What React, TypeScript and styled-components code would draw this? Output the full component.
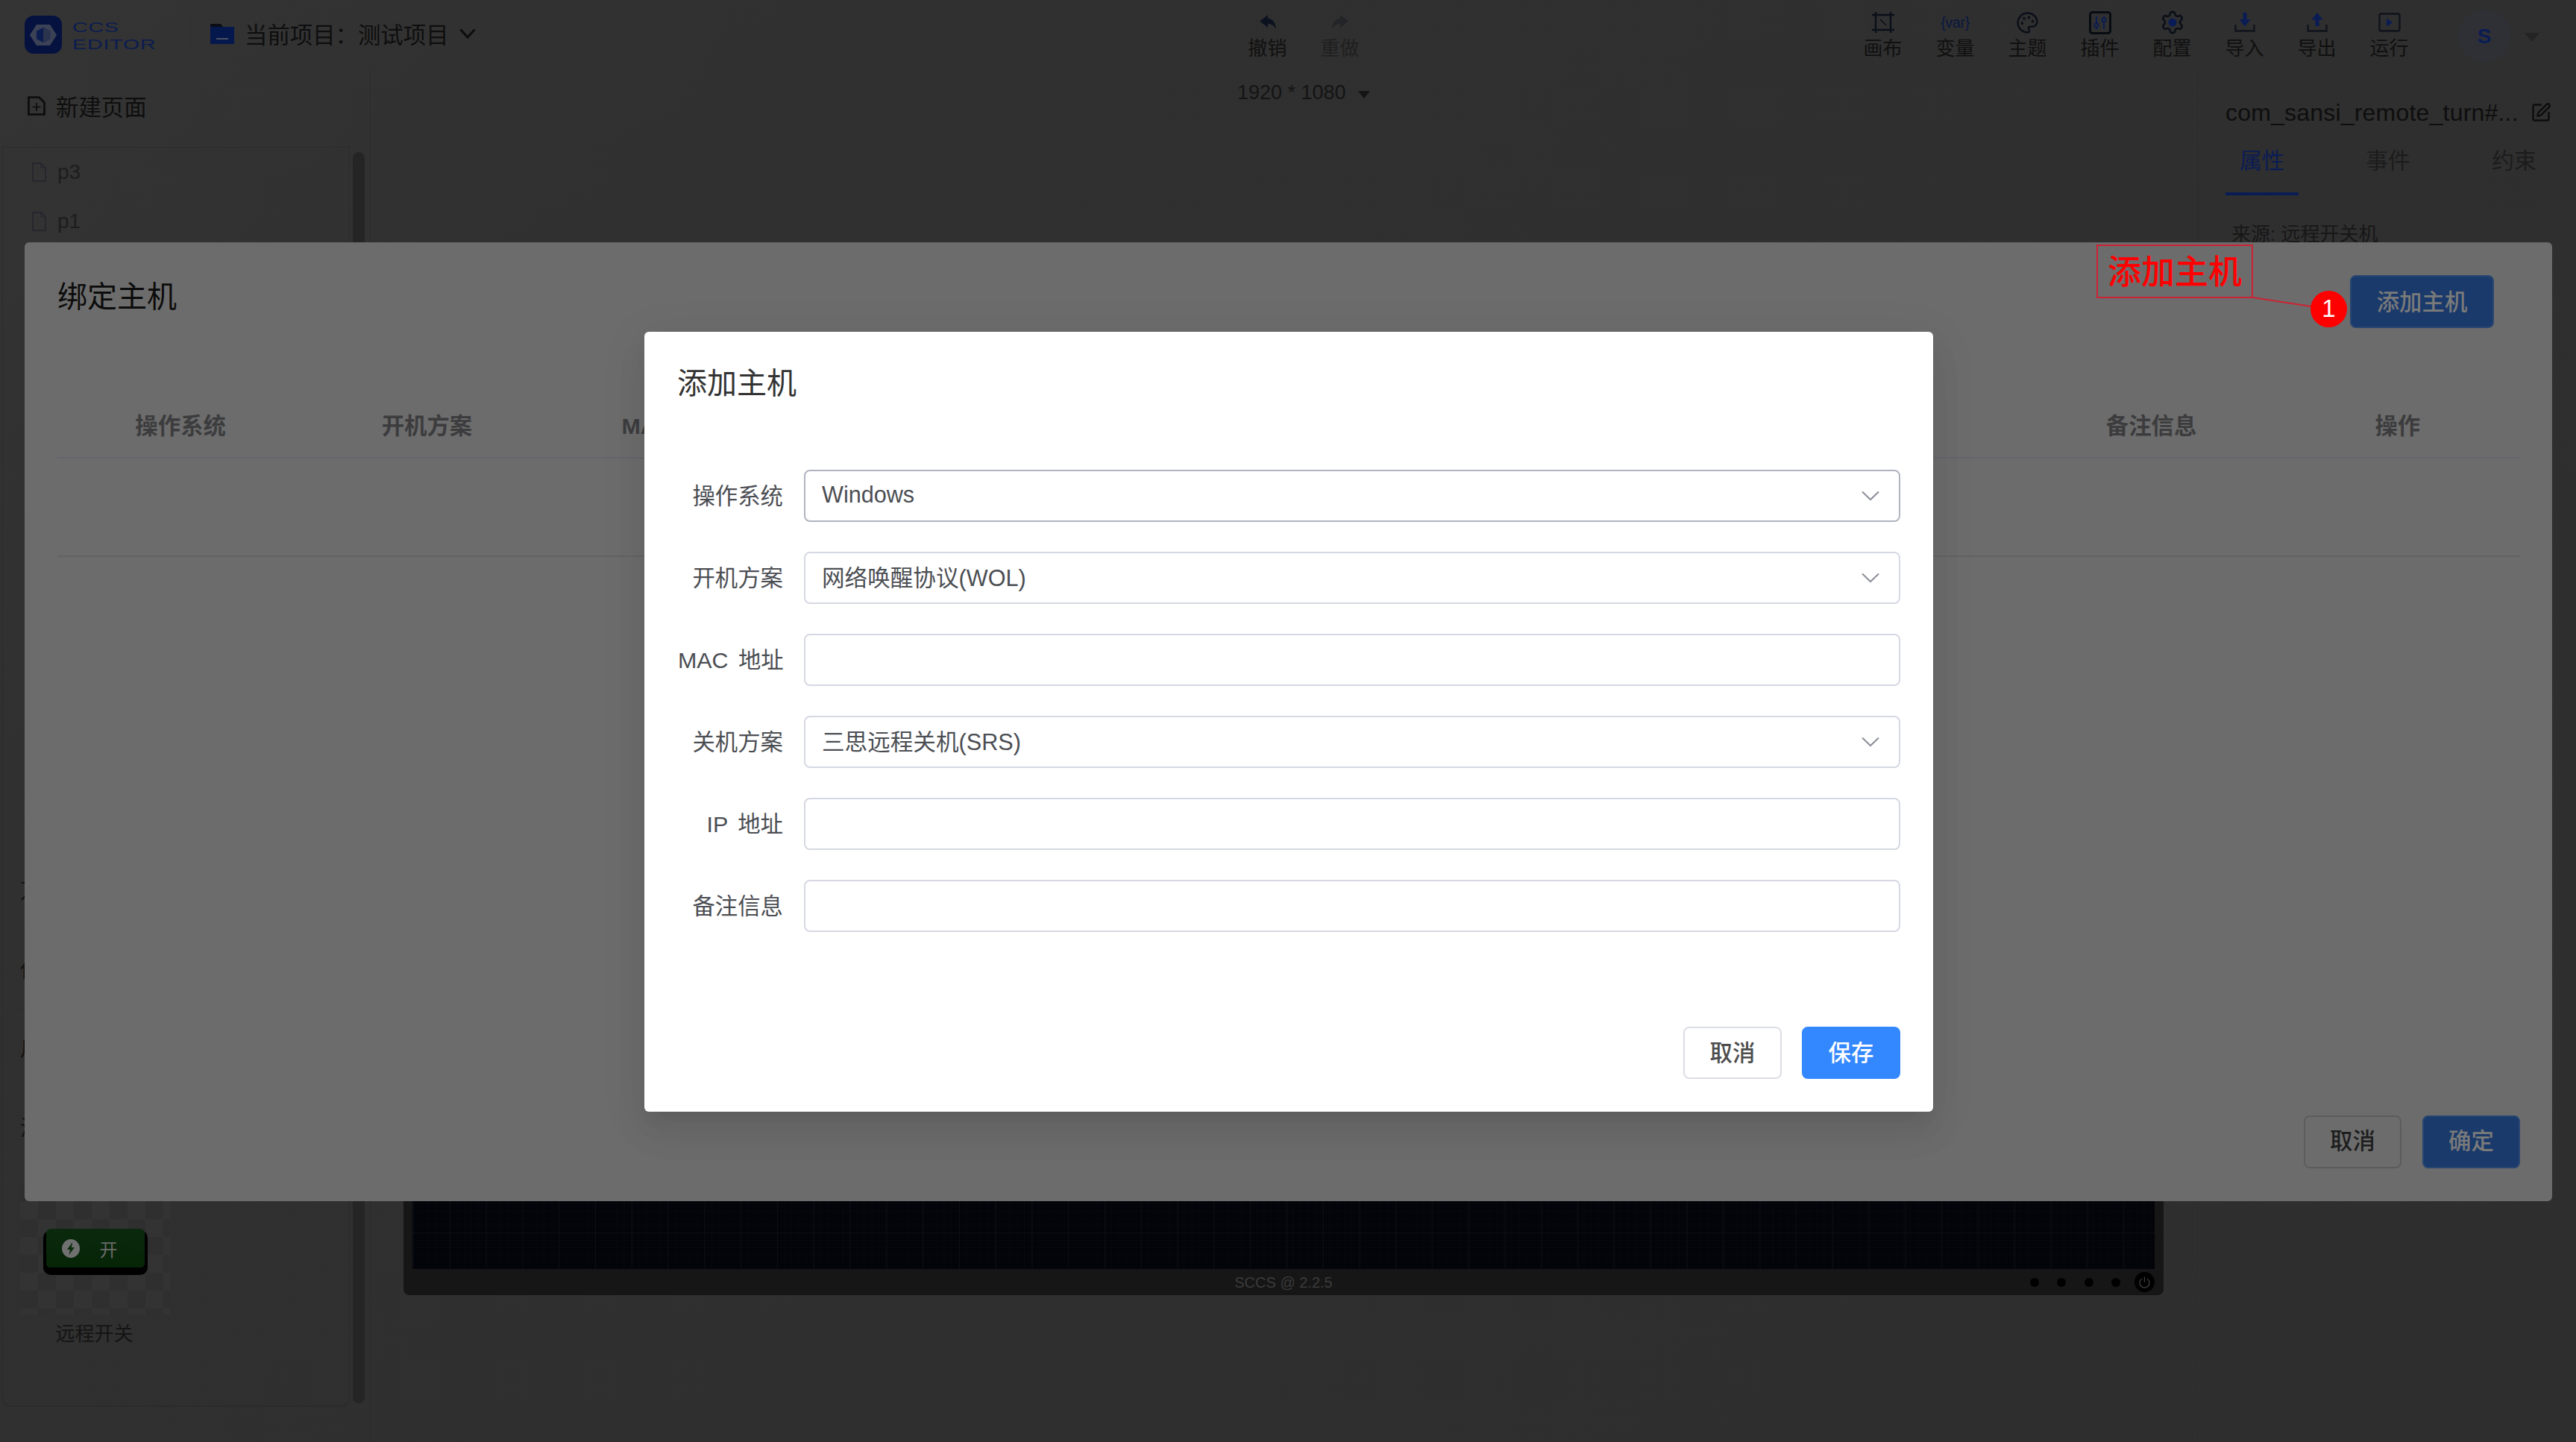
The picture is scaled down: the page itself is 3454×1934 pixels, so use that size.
import React from "react";
import styled, { createGlobalStyle } from "styled-components";
import { Palette, Settings, SquarePen } from "lucide-react";

const Global = createGlobalStyle`
  html, body { margin: 0; padding: 0; }
  * { box-sizing: border-box; }
  body { font-family: "Liberation Sans", "Noto Sans CJK SC", sans-serif; }
`;

const Root = styled.div`
  position: relative;
  width: 3454px;
  height: 1934px;
  overflow: hidden;
  display: flex;
  flex-direction: column;
  background: linear-gradient(135deg, #343434 0, #303030 20%, #2e2e2e 100%);
  color: #111;
`;

/* ---------- top bar ---------- */
const TopBar = styled.header`
  height: 92px;
  flex: none;
  display: flex;
  align-items: flex-start;
`;
const LeftGroup = styled.div`
  width: 1651px;
  height: 92px;
  flex: none;
  display: flex;
  align-items: flex-start;
  padding: 21px 0 0 33px;
`;
const LogoMark = styled.div`
  width: 50px;
  height: 51px;
  border-radius: 12px;
  background: #05123f;
  display: flex;
  align-items: center;
  justify-content: center;
`;
const LogoWords = styled.div`
  width: 157px;
  margin-left: 14px;
  padding-top: 8px;
  display: flex;
  flex-direction: column;
  gap: 8px;
`;
const LogoWord = styled.span`
  display: block;
  font-size: 19px;
  line-height: 15px;
  letter-spacing: 0.6px;
  color: #0b1c4f;
  transform: scaleX(1.5);
  transform-origin: left center;
`;
const LogoDivider = styled.div`
  width: 1px;
  height: 46px;
  margin-top: 2px;
  background: #303030;
`;
const ProjectPicker = styled.div`
  display: flex;
  align-items: center;
  margin-left: 27px;
  height: 42px;
  margin-top: 3px;
  font-size: 30.4px;
  color: #0e0e0e;
`;
const ProjectName = styled.span`
  margin: 0 14px 0 14px;
  white-space: nowrap;
`;
const ToolGroup = styled.div`
  display: flex;
`;
const RightGroup = styled.div`
  margin-left: auto;
  display: flex;
  align-items: flex-start;
  padding-right: 49px;
`;
const ToolItem = styled.div<{ $muted?: boolean }>`
  width: 97px;
  height: 80px;
  display: flex;
  flex-direction: column;
  align-items: center;
  padding-top: 14px;
  font-size: 26px;
  line-height: 26px;
  color: ${(p) => (p.$muted ? "#1f1f1f" : "#101010")};
`;
const ToolGlyph = styled.div`
  height: 32px;
  margin-bottom: 6px;
  display: flex;
  align-items: center;
  justify-content: center;
`;
const VarGlyph = styled.span`
  font-size: 20px;
  line-height: 32px;
  letter-spacing: -0.5px;
  color: #0a1840;
  white-space: nowrap;
`;
const GearGlyph = styled(Settings)`
  circle {
    fill: #0a1c55;
    stroke: #0a1c55;
  }
`;
const Avatar = styled.div`
  width: 70px;
  height: 70px;
  margin: 13px 0 0 44px;
  border-radius: 50%;
  background: #2f3036;
  color: #0a1c55;
  font-size: 28px;
  font-weight: 700;
  display: flex;
  align-items: center;
  justify-content: center;
  padding-top: 2px;
`;
const AvatarCaret = styled.span`
  width: 0;
  height: 0;
  margin: 44px 0 0 19px;
  border-left: 10px solid transparent;
  border-right: 10px solid transparent;
  border-top: 12px solid #242424;
`;

/* ---------- body ---------- */
const Body = styled.div`
  flex: 1;
  min-height: 0;
  display: flex;
`;
const Sidebar = styled.aside`
  width: 497px;
  flex: none;
  display: flex;
  flex-direction: column;
  border-right: 1px solid #2b2b2b;
  padding-bottom: 47px;
`;
const NewPage = styled.div`
  height: 105px;
  flex: none;
  display: flex;
  align-items: center;
  gap: 14px;
  padding: 0 0 6px 37px;
  font-size: 30.4px;
  color: #0e0e0e;
`;
const SidePanel = styled.div`
  flex: 1;
  min-height: 0;
  display: flex;
`;
const PageList = styled.div`
  width: 466px;
  margin-left: 3px;
  flex: none;
  display: flex;
  flex-direction: column;
  border: 1px solid #2b2b2b;
  border-bottom-width: 2px;
  border-radius: 0 0 12px 12px;
`;
const PageRow = styled.div`
  height: 66px;
  flex: none;
  display: flex;
  align-items: center;
  gap: 15px;
  padding-left: 39px;
  font-size: 28px;
  color: #1d1d1d;
`;
const HiddenRows = styled.div`
  margin-top: 811px;
  flex: none;
`;
const HiddenRow = styled.div`
  height: 106px;
  margin-left: 23px;
  border-top: 1px solid #2b2b2b;
  display: flex;
  align-items: center;
  padding-bottom: 3px;
  font-size: 28px;
  color: #111;
`;
const PreviewBox = styled.div`
  width: 201px;
  height: 176px;
  margin: 22px 0 0 23px;
  flex: none;
  display: flex;
  align-items: center;
  justify-content: center;
  background: repeating-conic-gradient(#333333 0 25%, #2f2f2f 0 50%) 0 0 / 48px 48px;
`;
const SwitchButton = styled.div`
  width: 132px;
  height: 52px;
  margin-top: -2px;
  border-radius: 6px;
  background: linear-gradient(#0b290d, #062406);
  box-shadow: 0 6px 0 4px #000;
  display: flex;
  align-items: center;
  padding-left: 21px;
  gap: 27px;
  font-size: 24px;
  color: #6a6a6a;
`;
const PreviewLabel = styled.div`
  width: 201px;
  margin: 13px 0 0 22px;
  text-align: center;
  font-size: 26px;
  line-height: 26px;
  color: #141414;
`;
const ScrollThumb = styled.div`
  width: 16px;
  margin: 7px 0 5px 4px;
  border-radius: 8px;
  background: #252525;
`;

const Stage = styled.main`
  flex: 1;
  min-width: 0;
  display: flex;
  flex-direction: column;
  padding: 0 45px 197px 44px;
`;
const SizeRow = styled.div`
  display: flex;
  align-items: center;
  margin: 18px 0 0 1118px;
  height: 28px;
  font-size: 27px;
  color: #141414;
`;
const SizeCaret = styled.span`
  width: 0;
  height: 0;
  margin: 6px 0 0 16px;
  border-left: 8px solid transparent;
  border-right: 8px solid transparent;
  border-top: 10px solid #141414;
`;
const DeviceFrame = styled.div`
  margin-top: auto;
  height: 1237px;
  display: flex;
  flex-direction: column;
  padding: 0 12px;
  background: #161616;
  border-radius: 0 0 8px 8px;
`;
const GridCanvas = styled.div`
  flex: 1;
  background-color: #03040a;
  background-image:
    linear-gradient(#0d0e14 1px, transparent 1px),
    linear-gradient(90deg, #0d0e14 1px, transparent 1px),
    linear-gradient(#06070d 1px, transparent 1px),
    linear-gradient(90deg, #06070d 1px, transparent 1px);
  background-size: 48.8px 48.8px, 48.8px 48.8px, 9.76px 9.76px, 9.76px 9.76px;
  background-position: 1px 100%, 1px 100%, 1px 100%, 1px 100%;
`;
const DeviceFoot = styled.div`
  height: 35px;
  flex: none;
  display: grid;
  grid-template-columns: 1fr auto 1fr;
  align-items: center;
`;
const Version = styled.span`
  grid-column: 2;
  font-size: 20px;
  line-height: 20px;
  color: #3b3b3b;
`;
const DeviceControls = styled.div`
  grid-column: 3;
  justify-self: end;
  display: flex;
  align-items: center;
  gap: 24.6px;
`;
const DeviceDot = styled.span`
  width: 12px;
  height: 12px;
  border-radius: 50%;
  background: #000;
`;
const PowerDot = styled.span`
  width: 27px;
  height: 27px;
  margin-left: -6px;
  border-radius: 50%;
  background: #000;
  display: flex;
  align-items: center;
  justify-content: center;
`;

const Inspector = styled.aside`
  width: 508px;
  flex: none;
  border-left: 1px solid #2b2b2b;
  padding-left: 37px;
`;
const InspectorTitle = styled.div`
  display: flex;
  align-items: center;
  margin-top: 42px;
  height: 34px;
  font-size: 32px;
  letter-spacing: 0.2px;
  color: #0e0e0e;
`;
const TitleText = styled.span`
  width: 409px;
  flex: none;
  white-space: nowrap;
`;
const TabRow = styled.div`
  display: flex;
  gap: 71px;
  margin-top: 17px;
`;
const Tab = styled.div<{ $active?: boolean }>`
  width: 98px;
  height: 77px;
  padding-top: 16px;
  text-align: center;
  font-size: 30px;
  line-height: 30px;
  color: ${(p) => (p.$active ? "#0a1c55" : "#1c1c1c")};
  border-bottom: 4px solid ${(p) => (p.$active ? "#0a1c55" : "transparent")};
`;
const SourceText = styled.div`
  margin: 39px 0 0 8px;
  font-size: 26px;
  line-height: 26px;
  color: #171717;
`;

/* ---------- bind-host dialog ---------- */
const BindDialog = styled.section`
  position: absolute;
  left: 33px;
  top: 325px;
  width: 3389px;
  height: 1286px;
  padding: 44px 42px 44px 44px;
  display: flex;
  flex-direction: column;
  background: #6c6c6c;
  border-radius: 6px;
`;
const BindHead = styled.div`
  height: 70px;
  flex: none;
  display: flex;
  justify-content: space-between;
`;
const BindTitle = styled.h2`
  margin: 9px 0 0;
  font-size: 40px;
  line-height: 40px;
  font-weight: 400;
  color: #0c0c0c;
`;
const HostTable = styled.div`
  margin-top: 89px;
  flex: none;
`;
const HostHeader = styled.div`
  height: 87px;
  display: grid;
  grid-template-columns: repeat(10, 1fr);
  align-items: center;
  padding-bottom: 4px;
  border-bottom: 2px solid #64646c;
`;
const HostCol = styled.div`
  text-align: center;
  font-size: 30.4px;
  font-weight: 700;
  color: #3c3c3e;
  white-space: nowrap;
`;
const HostEmpty = styled.div`
  height: 132px;
  border-bottom: 2px solid #636363;
`;
const DimButton = styled.div<{ $primary?: boolean; $wide?: boolean }>`
  width: ${(p) => (p.$wide ? "193px" : "131px")};
  height: 71px;
  margin-right: ${(p) => (p.$wide ? "36px" : "0")};
  display: flex;
  align-items: center;
  justify-content: center;
  padding-bottom: 4px;
  border-radius: 8px;
  font-size: 30.4px;
  font-weight: 500;
  color: ${(p) => (p.$primary ? "#7a7a7a" : "#1e1e1e")};
  background: ${(p) => (p.$primary ? "#1a3a6b" : "transparent")};
  border: 2px solid ${(p) => (p.$primary ? "#284670" : "#5c5c5c")};
`;
const BindFoot = styled.div`
  margin-top: auto;
  display: flex;
  justify-content: flex-end;
  gap: 28px;
  padding-right: 1px;
  ${DimButton} {
    padding-bottom: 7px;
  }
`;

/* ---------- add-host dialog ---------- */
const AddDialog = styled.section`
  position: absolute;
  left: 864px;
  top: 445px;
  width: 1728px;
  height: 1046px;
  padding: 49px 44px 44px 45px;
  display: flex;
  flex-direction: column;
  background: #fff;
  border-radius: 6px;
  box-shadow: 0 12px 60px 10px rgba(0, 0, 0, 0.05), 0 32px 48px 4px rgba(0, 0, 0, 0.04),
    0 16px 20px -10px rgba(0, 0, 0, 0.08);
`;
const AddTitle = styled.h2`
  margin: 0 0 0 -1px;
  font-size: 40px;
  line-height: 40px;
  font-weight: 400;
  color: #333;
`;
const Form = styled.div`
  margin-top: 96px;
  display: flex;
  flex-direction: column;
  gap: 40px;
`;
const FormRow = styled.div`
  display: grid;
  grid-template-columns: 141px 1fr;
  column-gap: 28px;
  align-items: center;
`;
const FormLabel = styled.label`
  text-align: right;
  font-size: 30.4px;
  word-spacing: 5px;
  padding-bottom: 5px;
  color: #4b4e53;
  white-space: nowrap;
`;
const Field = styled.div<{ $focused?: boolean }>`
  height: 70px;
  display: flex;
  align-items: center;
  justify-content: space-between;
  padding: 0 26px 4px 22px;
  border: 2px solid ${(p) => (p.$focused ? "#b1b4c0" : "#d6d8e3")};
  border-radius: 8px;
  font-size: 30.6px;
  color: #4b4e53;
  background: #fff;
  svg {
    margin-top: 4px;
  }
`;
const AddFoot = styled.div`
  margin-top: auto;
  display: flex;
  justify-content: flex-end;
  gap: 27px;
`;
const AddButton = styled.div<{ $primary?: boolean }>`
  width: 132px;
  height: 70px;
  display: flex;
  align-items: center;
  justify-content: center;
  padding-bottom: 4px;
  border-radius: 8px;
  font-size: 30.4px;
  font-weight: 500;
  color: ${(p) => (p.$primary ? "#fff" : "#4d4d4d")};
  background: ${(p) => (p.$primary ? "#3388ff" : "#fff")};
  border: 2px solid ${(p) => (p.$primary ? "#3388ff" : "#dcdee6")};
`;

/* ---------- annotation ---------- */
const CalloutBox = styled.div`
  position: absolute;
  left: 2811px;
  top: 328px;
  width: 210px;
  height: 72px;
  border: 2px solid #cc2233;
  display: flex;
  align-items: center;
  justify-content: center;
  font-size: 45px;
  font-weight: 500;
  line-height: 50px;
  color: #ff0000;
  padding-top: 3px;
  white-space: nowrap;
`;
const CalloutLine = styled.svg`
  position: absolute;
  left: 3020px;
  top: 398px;
`;
const CalloutBadge = styled.div`
  position: absolute;
  left: 3098px;
  top: 390px;
  width: 49px;
  height: 49px;
  border-radius: 50%;
  background: #ff0000;
  color: #fff;
  font-size: 33px;
  padding-bottom: 2px;
  display: flex;
  align-items: center;
  justify-content: center;
`;

/* ---------- drawings ---------- */
const Chevron = () => (
  <svg width="24" height="14" viewBox="0 0 24 14" fill="none">
    <path d="M1 1.500 12 12 23 1.500" stroke="#8c8f98" strokeWidth="2" />
  </svg>
);

const UndoIcon = ({ color, flip }: { color: string; flip?: boolean }) => (
  <svg width="26" height="22" viewBox="0 0 26 22" style={flip ? { transform: "scaleX(-1)" } : undefined}>
    <path d="M13 1 2 9.500 13 18v-5c5 0 8 2 11 7-.5-8-4-13.500-11-14.500z" fill={color} />
  </svg>
);

const App = () => {
  const tools: [string, React.ReactNode][] = [
    [
      "画布",
      <svg width="32" height="30" viewBox="0 0 32 30" fill="none" stroke="#0a0f18" strokeWidth="2.4">
        <path d="M1 5h30M1 25h30M6 1v28M26 1v28" />
        <path d="M12 11l8 8" strokeWidth="1.6" />
      </svg>,
    ],
    ["变量", <VarGlyph>{"{var}"}</VarGlyph>],
    ["主题", <Palette size={31} color="#0a0f18" strokeWidth={1.9} />],
    [
      "插件",
      <svg width="30" height="31" viewBox="0 0 30 31" fill="none">
        <rect x="1.500" y="1.500" width="27" height="28" rx="3" stroke="#080b12" strokeWidth="3" />
        <path d="M10 7v17M20 7v17" stroke="#0a1c55" strokeWidth="2" />
        <circle cx="10" cy="19" r="2.6" fill="#2e2e2e" stroke="#0a1c55" strokeWidth="1.8" />
        <circle cx="20" cy="12" r="2.6" fill="#2e2e2e" stroke="#0a1c55" strokeWidth="1.8" />
      </svg>,
    ],
    ["配置", <GearGlyph size={34} color="#0a0f18" strokeWidth={1.8} />],
    [
      "导入",
      <svg width="28" height="26" viewBox="0 0 28 26" fill="none">
        <path d="M1.500 16v8.500h25V16" stroke="#10131c" strokeWidth="2.4" />
        <path d="M14 0v10" stroke="#0a1c55" strokeWidth="5" />
        <path d="M6.500 9h15L14 18.500z" fill="#0a1c55" />
      </svg>,
    ],
    [
      "导出",
      <svg width="28" height="26" viewBox="0 0 28 26" fill="none">
        <path d="M1.500 16v8.500h25V16" stroke="#10131c" strokeWidth="2.4" />
        <path d="M14 8v10" stroke="#0a1c55" strokeWidth="5" />
        <path d="M6.500 9.500h15L14 0z" fill="#0a1c55" />
      </svg>,
    ],
    [
      "运行",
      <svg width="30" height="26" viewBox="0 0 30 26" fill="none">
        <rect x="1.500" y="1.500" width="27" height="23" rx="2" stroke="#10131c" strokeWidth="2.4" />
        <path d="M11 7.500 19 13l-8 5.500z" fill="#0a1c55" />
      </svg>,
    ],
  ];

  const pageFile = (
    <svg width="19" height="26" viewBox="0 0 19 26" fill="none">
      <path d="M1 1h11l6 6v18H1z" stroke="#23252e" strokeWidth="1.6" />
      <path d="M12 1v6h6" stroke="#23252e" strokeWidth="1.2" />
    </svg>
  );

  return (
    <Root>
      <Global />
      <TopBar>
        <LeftGroup>
          <LogoMark>
            <svg width="38" height="38" viewBox="0 0 38 38" fill="none">
              <path d="M10 5h18l9 14-9 14H10L1 19z" fill="#3c4256" />
              <path d="M19 9l9 5v10l-9 5-9-5V14z" fill="#0a1c50" stroke="#1c2a55" strokeWidth="1" />
              <path d="M19 9l9 5v10l-9 5z" fill="#2c344d" />
            </svg>
          </LogoMark>
          <LogoWords>
            <LogoWord>CCS</LogoWord>
            <LogoWord>EDITOR</LogoWord>
          </LogoWords>
          <LogoDivider />
          <ProjectPicker>
            <svg width="32" height="27" viewBox="0 0 32 27">
              <path d="M0 0h14l3 4h-17z" fill="#0b0d14" />
              <path d="M0 4h32v23H0z" fill="#05184d" />
              <path d="M8 19h16v2H8z" fill="#4a5060" />
            </svg>
            <ProjectName>当前项目：测试项目</ProjectName>
            <svg width="22" height="14" viewBox="0 0 22 14" fill="none">
              <path d="M1.500 1.500 11 12l9.500-10.500" stroke="#0d0d0d" strokeWidth="3" />
            </svg>
          </ProjectPicker>
        </LeftGroup>
        <ToolGroup>
          <ToolItem>
            <ToolGlyph>
              <UndoIcon color="#0c1220" />
            </ToolGlyph>
            撤销
          </ToolItem>
          <ToolItem $muted>
            <ToolGlyph>
              <UndoIcon color="#222428" flip />
            </ToolGlyph>
            重做
          </ToolItem>
        </ToolGroup>
        <RightGroup>
          {tools.map(([label, glyph]) => (
            <ToolItem key={label}>
              <ToolGlyph>{glyph}</ToolGlyph>
              {label}
            </ToolItem>
          ))}
          <Avatar>S</Avatar>
          <AvatarCaret />
        </RightGroup>
      </TopBar>

      <Body>
        <Sidebar>
          <NewPage>
            <svg width="24" height="26" viewBox="0 0 24 26" fill="none" stroke="#0b0b0b">
              <path d="M1.500 1.500h14l7 7v16h-21z" strokeWidth="2.6" />
              <path d="M12 9v11M6.500 14.500h11" strokeWidth="1.6" />
            </svg>
            新建页面
          </NewPage>
          <SidePanel>
            <PageList>
              <PageRow>
                {pageFile}
                p3
              </PageRow>
              <PageRow>
                {pageFile}
                p1
              </PageRow>
              <HiddenRows>
                <HiddenRow>万</HiddenRow>
                <HiddenRow>仪</HiddenRow>
                <HiddenRow>川</HiddenRow>
                <HiddenRow>温</HiddenRow>
              </HiddenRows>
              <PreviewBox>
                <SwitchButton>
                  <svg width="24" height="25" viewBox="0 0 24 25">
                    <ellipse cx="12" cy="12.500" rx="12" ry="12.500" fill="#707070" />
                    <path d="M14 4 7 14h4l-1.500 7L17 11h-4z" fill="#0b2c0d" />
                  </svg>
                  开
                </SwitchButton>
              </PreviewBox>
              <PreviewLabel>远程开关</PreviewLabel>
            </PageList>
            <ScrollThumb />
          </SidePanel>
        </Sidebar>

        <Stage>
          <SizeRow>
            1920 * 1080
            <SizeCaret />
          </SizeRow>
          <DeviceFrame>
            <GridCanvas />
            <DeviceFoot>
              <Version>SCCS @ 2.2.5</Version>
              <DeviceControls>
                <DeviceDot />
                <DeviceDot />
                <DeviceDot />
                <DeviceDot />
                <PowerDot>
                  <svg width="17" height="17" viewBox="0 0 17 17" fill="none" stroke="#3a3a3a" strokeWidth="1.4">
                    <path d="M5 4a6.500 6.500 0 1 0 7 0M8.500 1.500v7" />
                  </svg>
                </PowerDot>
              </DeviceControls>
            </DeviceFoot>
          </DeviceFrame>
        </Stage>

        <Inspector>
          <InspectorTitle>
            <TitleText>com_sansi_remote_turn#...</TitleText>
            <SquarePen size={28} color="#0d0d0d" strokeWidth={2} />
          </InspectorTitle>
          <TabRow>
            <Tab $active>属性</Tab>
            <Tab>事件</Tab>
            <Tab>约束</Tab>
          </TabRow>
          <SourceText>来源: 远程开关机</SourceText>
        </Inspector>
      </Body>

      <BindDialog>
        <BindHead>
          <BindTitle>绑定主机</BindTitle>
          <DimButton $primary $wide>
            添加主机
          </DimButton>
        </BindHead>
        <HostTable>
          <HostHeader>
            <HostCol>操作系统</HostCol>
            <HostCol>开机方案</HostCol>
            <HostCol>MAC 地址</HostCol>
            <HostCol />
            <HostCol />
            <HostCol />
            <HostCol />
            <HostCol />
            <HostCol>备注信息</HostCol>
            <HostCol>操作</HostCol>
          </HostHeader>
          <HostEmpty />
        </HostTable>
        <BindFoot>
          <DimButton>取消</DimButton>
          <DimButton $primary>确定</DimButton>
        </BindFoot>
      </BindDialog>

      <CalloutLine width="82" height="16" viewBox="0 0 82 16">
        <line x1="1" y1="1" x2="79" y2="13" stroke="#cc2233" strokeWidth="2" />
      </CalloutLine>
      <CalloutBox>添加主机</CalloutBox>
      <CalloutBadge>1</CalloutBadge>

      <AddDialog>
        <AddTitle>添加主机</AddTitle>
        <Form>
          <FormRow>
            <FormLabel>操作系统</FormLabel>
            <Field $focused>
              Windows
              <Chevron />
            </Field>
          </FormRow>
          <FormRow>
            <FormLabel>开机方案</FormLabel>
            <Field>
              网络唤醒协议(WOL)
              <Chevron />
            </Field>
          </FormRow>
          <FormRow>
            <FormLabel>MAC 地址</FormLabel>
            <Field />
          </FormRow>
          <FormRow>
            <FormLabel>关机方案</FormLabel>
            <Field>
              三思远程关机(SRS)
              <Chevron />
            </Field>
          </FormRow>
          <FormRow>
            <FormLabel>IP 地址</FormLabel>
            <Field />
          </FormRow>
          <FormRow>
            <FormLabel>备注信息</FormLabel>
            <Field />
          </FormRow>
        </Form>
        <AddFoot>
          <AddButton>取消</AddButton>
          <AddButton $primary>保存</AddButton>
        </AddFoot>
      </AddDialog>
    </Root>
  );
};

export default App;
